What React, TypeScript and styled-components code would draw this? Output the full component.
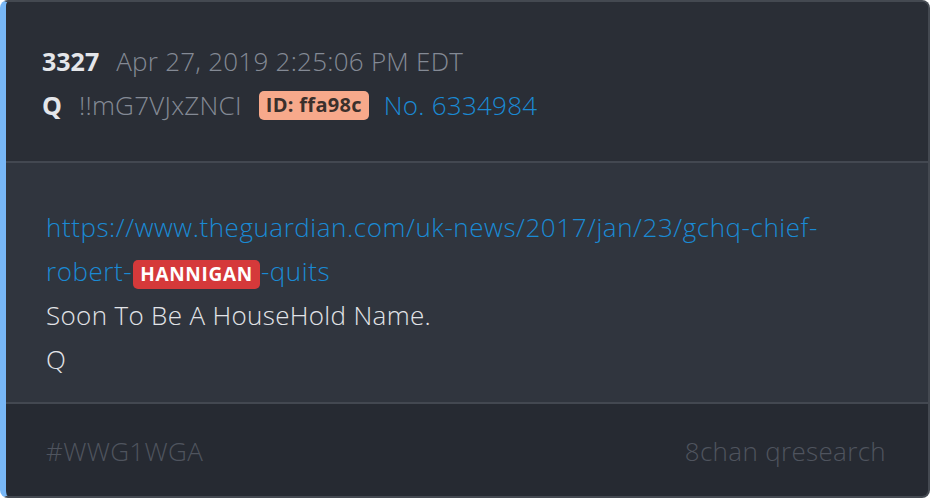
import styled, { createGlobalStyle } from "styled-components";

const Global = createGlobalStyle`
  html, body { margin: 0; padding: 0; background: #ffffff; }
  body { font-family: "Open Sans", "Noto Sans", sans-serif; }
`;

const Card = styled.article`
  box-sizing: border-box;
  width: 930px;
  height: 498px;
  display: flex;
  flex-direction: column;
  border: 2px solid #444951;
  border-left: 6px solid #78b7f6;
  border-radius: 8px;
  overflow: hidden;
  background: #262a32;
`;

const Header = styled.header`
  padding: 37px 36px 34px;
  background: #2a2e36;
  border-bottom: 2px solid #434851;
  font-size: 26px;
  font-weight: 300;
  letter-spacing: 0.25px;
  line-height: 44px;
`;

const Line = styled.div`
  display: flex;
  align-items: center;
  white-space: nowrap;
`;

const Strong = styled.span`
  font-weight: 700;
  font-size: 25px;
  letter-spacing: 0;
  color: #e4e6ea;
  margin-right: 17px;
`;

const Muted = styled.span`
  color: #848a95;
  margin-right: 16px;
`;

const Badge = styled.span<{ $bg: string; $fg: string; $size: number; $track: number }>`
  display: inline-flex;
  align-items: center;
  height: 29px;
  padding: 0 7px;
  margin: 0 1px;
  border-radius: 5px;
  background: ${(p) => p.$bg};
  color: ${(p) => p.$fg};
  font-size: ${(p) => p.$size}px;
  letter-spacing: ${(p) => p.$track}px;
  font-weight: 700;
  line-height: 1;
  vertical-align: middle;
`;

const PostNo = styled.span`
  color: #1a8ad4;
  margin-left: 14px;
`;

const Body = styled.section`
  flex: 1;
  padding: 42px 48px 0 40px;
  background: #30353e;
  border-bottom: 2px solid #434851;
  font-size: 26px;
  font-weight: 300;
  letter-spacing: 0.33px;
  line-height: 44px;
  color: #e2e4e8;
`;

const Link = styled.a`
  color: #1a8ad4;
  letter-spacing: 0.55px;
  text-decoration: none;
`;

const Footer = styled.footer`
  display: flex;
  justify-content: space-between;
  height: 92px;
  box-sizing: border-box;
  padding: 25px 42px 0 40px;
  font-size: 26px;
  font-weight: 300;
  letter-spacing: 0.33px;
  line-height: 44px;
  color: #4f545e;
`;

export default function App() {
  return (
    <>
      <Global />
      <Card>
        <Header>
          <Line>
            <Strong>3327</Strong>
            <Muted>Apr 27, 2019 2:25:06 PM EDT</Muted>
          </Line>
          <Line>
            <Strong>Q</Strong>
            <Muted>!!mG7VJxZNCI</Muted>
            <Badge $bg="#f7a98b" $fg="#3b302c" $size={20} $track={0.3}>ID: ffa98c</Badge>
            <PostNo>No. 6334984</PostNo>
          </Line>
        </Header>
        <Body>
          <Link href="#">
            https://www.theguardian.com/uk-news/2017/jan/23/gchq-chief-robert-
            <Badge $bg="#d5393a" $fg="#ffffff" $size={19} $track={0.7}>HANNIGAN</Badge>
            -quits
          </Link>
          <div>Soon To Be A HouseHold Name.</div>
          <div>Q</div>
        </Body>
        <Footer>
          <span>#WWG1WGA</span>
          <span>8chan qresearch</span>
        </Footer>
      </Card>
    </>
  );
}
